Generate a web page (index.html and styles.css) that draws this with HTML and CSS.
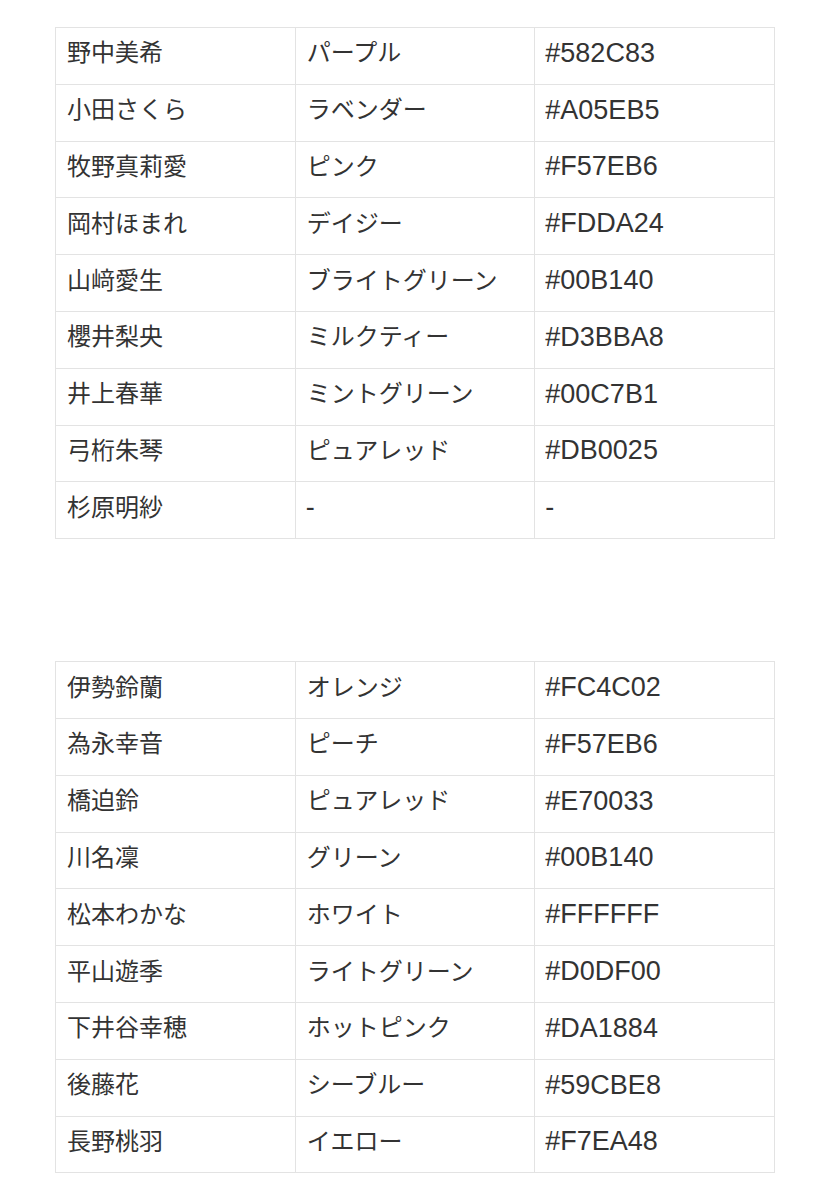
FILE: index.html
```html
<!DOCTYPE html>
<html lang="ja">
<head>
<meta charset="utf-8">
<link rel="stylesheet" href="styles.css">
</head>
<body>
<table class="tbl first">
<tr><td>野中美希</td><td>パープル</td><td class="code">#582C83</td></tr>
<tr><td>小田さくら</td><td>ラベンダー</td><td class="code">#A05EB5</td></tr>
<tr><td>牧野真莉愛</td><td>ピンク</td><td class="code">#F57EB6</td></tr>
<tr><td>岡村ほまれ</td><td>デイジー</td><td class="code">#FDDA24</td></tr>
<tr><td>山﨑愛生</td><td>ブライトグリーン</td><td class="code">#00B140</td></tr>
<tr><td>櫻井梨央</td><td>ミルクティー</td><td class="code">#D3BBA8</td></tr>
<tr><td>井上春華</td><td>ミントグリーン</td><td class="code">#00C7B1</td></tr>
<tr><td>弓桁朱琴</td><td>ピュアレッド</td><td class="code">#DB0025</td></tr>
<tr><td>杉原明紗</td><td class="code">-</td><td class="code">-</td></tr>
</table>
<table class="tbl second">
<tr><td>伊勢鈴蘭</td><td>オレンジ</td><td class="code">#FC4C02</td></tr>
<tr><td>為永幸音</td><td>ピーチ</td><td class="code">#F57EB6</td></tr>
<tr><td>橋迫鈴</td><td>ピュアレッド</td><td class="code">#E70033</td></tr>
<tr><td>川名凜</td><td>グリーン</td><td class="code">#00B140</td></tr>
<tr><td>松本わかな</td><td>ホワイト</td><td class="code">#FFFFFF</td></tr>
<tr><td>平山遊季</td><td>ライトグリーン</td><td class="code">#D0DF00</td></tr>
<tr><td>下井谷幸穂</td><td>ホットピンク</td><td class="code">#DA1884</td></tr>
<tr><td>後藤花</td><td>シーブルー</td><td class="code">#59CBE8</td></tr>
<tr><td>長野桃羽</td><td>イエロー</td><td class="code">#F7EA48</td></tr>
</table>
</body>
</html>
```
FILE: styles.css
```css
html, body {
  margin: 0;
  padding: 0;
  background: #ffffff;
}
body {
  font-family: "Liberation Sans", "Noto Sans CJK JP", sans-serif;
  color: #333333;
  padding-top: 27px;
}
.tbl {
  border-collapse: collapse;
  margin-left: 55px;
  width: 720px;
  table-layout: fixed;
}
.second {
  margin-top: 122px;
}
.tbl td {
  border: 1px solid #e3e3e3;
  height: 56.8px;
  padding: 0 0 5px 11px;
  box-sizing: border-box;
  font-size: 24px;
  line-height: 1;
  vertical-align: middle;
  white-space: nowrap;
}
.tbl td.code {
  font-size: 27px;
  padding-left: 10px;
}
```
